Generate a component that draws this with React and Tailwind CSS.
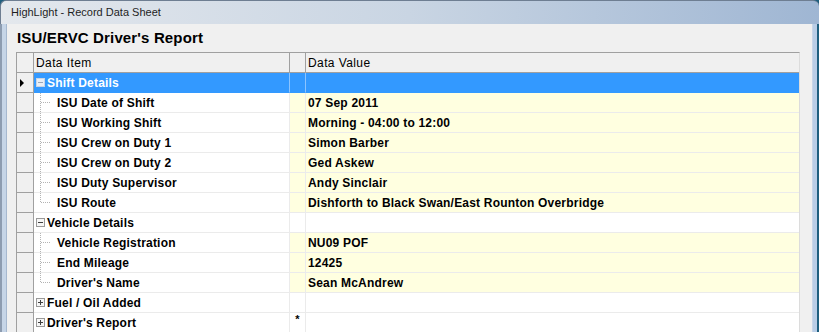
import React from 'react';

const rows = [
    { type: 'group', label: 'Shift Details', open: true, selected: true },
    { type: 'child', label: 'ISU Date of Shift', value: '07 Sep 2011' },
    { type: 'child', label: 'ISU Working Shift', value: 'Morning - 04:00 to 12:00' },
    { type: 'child', label: 'ISU Crew on Duty 1', value: 'Simon Barber' },
    { type: 'child', label: 'ISU Crew on Duty 2', value: 'Ged Askew' },
    { type: 'child', label: 'ISU Duty Supervisor', value: 'Andy Sinclair' },
    { type: 'child', label: 'ISU Route', value: 'Dishforth to Black Swan/East Rounton Overbridge', last: true },
    { type: 'group', label: 'Vehicle Details', open: true },
    { type: 'child', label: 'Vehicle Registration', value: 'NU09 POF' },
    { type: 'child', label: 'End Mileage', value: '12425' },
    { type: 'child', label: "Driver's Name", value: 'Sean McAndrew', last: true },
    { type: 'group', label: 'Fuel / Oil Added', open: false },
    { type: 'group', label: "Driver's Report", open: false, star: true },
];

const ExpandBox = ({ open, selected }) => (
    <svg width="9" height="9" viewBox="0 0 9 9" className="shrink-0">
        <rect x="0.5" y="0.5" width="8" height="8" fill={selected ? '#e8eef6' : '#f6f6f6'} stroke={selected ? '#c8d4e4' : '#9a9a9a'} />
        <line x1="2" y1="4.5" x2="7" y2="4.5" stroke={selected ? '#9aa8ba' : '#404040'} />
        {!open && <line x1="4.5" y1="2" x2="4.5" y2="7" stroke="#404040" />}
    </svg>
);

// dotted tree connector for child rows
const TreeLines = ({ last }) => (
    <svg width="23" height="19" viewBox="0 0 23 19" className="shrink-0">
        <line x1="6.5" y1="0" x2="6.5" y2={last ? 10 : 19} stroke="#b4b4b4" strokeDasharray="1 1" />
        <line x1="7" y1="9.5" x2="17" y2="9.5" stroke="#b4b4b4" strokeDasharray="1 1" />
    </svg>
);

const Row = ({ row }) => {
    const sel = row.selected;
    const child = row.type === 'child';
    const cellBg = sel ? 'bg-[#3399ff]' : child ? 'bg-[#ffffe0]' : 'bg-white';
    const textColor = sel ? 'text-white' : 'text-[#000000]';

    return (
        <div className="flex h-[20px]">
            <div className="w-[17px] shrink-0 bg-[#f0f0f0] border-r border-b border-[#a0a0a0] flex items-center pl-[3px]">
                {sel && (
                    <svg width="5" height="8" viewBox="0 0 5 8">
                        <path d="M0 0 L4 4 L0 8 Z" fill="#000" />
                    </svg>
                )}
            </div>
            <div className={`w-[256px] shrink-0 flex items-center border-r border-b ${sel ? 'bg-[#3399ff] border-[#3399ff] border-r-[#8cc4ff]' : 'bg-white border-[#ebebeb]'} ${textColor}`}>
                {child ? (
                    <>
                        <TreeLines last={row.last} />
                        <span>{row.label}</span>
                    </>
                ) : (
                    <div className="flex items-center pl-[2px] gap-[2px]">
                        <ExpandBox open={row.open} selected={sel} />
                        <span>{row.label}</span>
                    </div>
                )}
            </div>
            <div className={`w-[16px] shrink-0 border-r border-b ${sel ? 'border-[#3399ff] border-r-[#8cc4ff]' : 'border-[#ebebeb]'} ${cellBg} text-center leading-[12px]`}>
                {row.star && <span className="text-[11px]">*</span>}
            </div>
            <div className={`flex-1 flex items-center pl-[2px] border-b ${sel ? 'border-[#3399ff]' : 'border-[#ebebeb]'} ${cellBg} ${textColor}`}>
                {row.value}
            </div>
        </div>
    );
};

const App = () => {
    return (
        <div className="w-[819px] h-[332px] overflow-hidden flex flex-col font-['Liberation_Sans',Arial,sans-serif] bg-[#1f5f7f]">
            <div className="h-[24px] shrink-0 flex items-center pl-[10px] rounded-tl-[6px] rounded-tr-[6px] border-t border-l border-[#6e7e92] bg-gradient-to-r from-[#e4e8ed] via-[#c9d5e3] to-[#9fb6d3]">
                <span className="text-[11px] text-[#1e1e1e]">HighLight - Record Data Sheet</span>
            </div>
            <div className="flex flex-1 min-h-0">
                <div className="w-[7px] shrink-0 bg-[#c6d5e7] border-l-2 border-r border-l-[#8d9cb0] border-r-[#a6b8cf]"></div>
                <div className="flex-1 bg-[#f0f0f0] flex flex-col min-w-0">
                    <div className="h-[28px] shrink-0 flex items-center pl-[10px]">
                        <h1 className="text-[15px] font-bold text-[#000] tracking-[0.15px]">ISU/ERVC Driver's Report</h1>
                    </div>
                    <div className="ml-[9px] mr-[12px] border-t border-l border-r border-t-[#a0a0a0] border-l-[#a0a0a0] border-r-[#dcdcdc] text-[12px] font-bold tracking-[0.2px]">
                        <div className="flex h-[20px] bg-[#f0f0f0] font-normal text-[#000] tracking-[0.4px]">
                            <div className="w-[17px] shrink-0 border-r border-b border-[#a0a0a0]"></div>
                            <div className="w-[256px] shrink-0 border-r border-b border-[#a0a0a0] flex items-center pl-[2px] pt-[1px]">Data Item</div>
                            <div className="w-[16px] shrink-0 border-r border-b border-[#a0a0a0]"></div>
                            <div className="flex-1 border-b border-[#a0a0a0] flex items-center pl-[2px] pt-[1px]">Data Value</div>
                        </div>
                        {rows.map((row, i) => (
                            <Row key={i} row={row} />
                        ))}
                    </div>
                </div>
                <div className="w-[7px] shrink-0 bg-[#b9cde6] border-l border-r-2 border-l-[#c8d6e8] border-r-[#1f5f7f]"></div>
            </div>
        </div>
    );
};

export default App;
